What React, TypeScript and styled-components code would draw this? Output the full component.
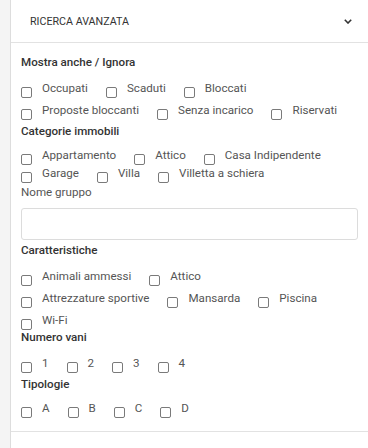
import React from "react";
import styled, { createGlobalStyle } from "styled-components";

const GlobalStyle = createGlobalStyle`
  html, body {
    margin: 0;
    padding: 0;
    background: #f4f4f4;
  }
  body {
    font-family: Roboto, "Liberation Sans", sans-serif;
  }
`;

const groups = {
  mostra: ["Occupati", "Scaduti", "Bloccati", "Proposte bloccanti", "Senza incarico", "Riservati"],
  categorie: ["Appartamento", "Attico", "Casa Indipendente", "Garage", "Villa", "Villetta a schiera"],
  caratteristiche: ["Animali ammessi", "Attico", "Attrezzature sportive", "Mansarda", "Piscina", "Wi-Fi"],
  vani: ["1", "2", "3", "4"],
  tipologie: ["A", "B", "C", "D"],
};

type CheckListProps = { items: string[]; rowHeight: number; top: number };

function CheckList({ items, rowHeight, top }: CheckListProps) {
  return (
    <CheckRow $top={top}>
      {items.map((item, i) => (
        <CheckItem key={i} $h={rowHeight}>
          <Box type="checkbox" $h={rowHeight} />
          <CheckLabel $h={rowHeight}>{item}</CheckLabel>
        </CheckItem>
      ))}
    </CheckRow>
  );
}

export default function App() {
  return (
    <>
      <GlobalStyle />
      <Page>
        <Panel>
          <Header>
            <HeaderTitle>Ricerca avanzata</HeaderTitle>
            <svg width="8" height="5" viewBox="0 0 8 5">
              <path d="M0.8 0.8L4 4l3.2-3.2" fill="none" stroke="#333" strokeWidth="1.6" />
            </svg>
          </Header>
          <Body>
            <Heading>Mostra anche / Ignora</Heading>
            <CheckList items={groups.mostra} rowHeight={22} top={6} />
            <Heading $top={1}>Categorie immobili</Heading>
            <CheckList items={groups.categorie} rowHeight={18} top={6} />
            <FieldLabel>Nome gruppo</FieldLabel>
            <TextInput type="text" />
            <Heading $top={1}>Caratteristiche</Heading>
            <CheckList items={groups.caratteristiche} rowHeight={22} top={6} />
            <Heading $top={-3}>Numero vani</Heading>
            <CheckList items={groups.vani} rowHeight={22} top={6} />
            <Heading $top={1}>Tipologie</Heading>
            <CheckList items={groups.tipologie} rowHeight={22} top={4} />
          </Body>
        </Panel>
      </Page>
    </>
  );
}

const Page = styled.div`
  padding-left: 10px;
  min-height: 448px;
  box-sizing: border-box;
`;

const Panel = styled.div`
  background: #fff;
  border-left: 1px solid #dddddd;
  min-height: 448px;
`;

const Header = styled.div`
  height: 43px;
  box-sizing: border-box;
  display: flex;
  align-items: center;
  justify-content: space-between;
  padding: 0 16px 0 19px;
  border-bottom: 1px solid #e2e2e2;
`;

const HeaderTitle = styled.div`
  font-size: 10.7px;
  text-transform: uppercase;
  color: #333;
`;

const Body = styled.div`
  padding: 10px 10px 12px 10px;
  border-bottom: 1px solid #e2e2e2;
`;

const Heading = styled.div<{ $top?: number }>`
  font-size: 11.6px;
  font-weight: 500;
  color: #333;
  line-height: 18px;
  margin-top: ${(p) => p.$top ?? 0}px;
`;

const CheckRow = styled.div<{ $top: number }>`
  display: flex;
  flex-wrap: wrap;
  margin-top: ${(p) => p.$top}px;
`;

const CheckItem = styled.label<{ $h: number }>`
  display: flex;
  align-items: flex-start;
  height: ${(p) => p.$h}px;
  margin-right: 18px;
`;

const Box = styled.input<{ $h: number }>`
  appearance: none;
  flex-shrink: 0;
  width: 11px;
  height: 11px;
  margin: ${(p) => p.$h / 2 - 1}px 10px 0 0;
  border: 1px solid #7a7a7a;
  border-radius: 2px;
  background: #fff;
`;

const CheckLabel = styled.span<{ $h: number }>`
  font-size: 11.6px;
  color: #555;
  line-height: ${(p) => p.$h}px;
  white-space: nowrap;
`;

const FieldLabel = styled.div`
  font-size: 11.6px;
  color: #555;
  line-height: 18px;
  margin-top: 1px;
  margin-bottom: 7px;
`;

const TextInput = styled.input`
  display: block;
  width: 100%;
  height: 32px;
  box-sizing: border-box;
  border: 1px solid #dcdcdc;
  border-radius: 3px;
  margin: 0;
  outline: none;
`;
